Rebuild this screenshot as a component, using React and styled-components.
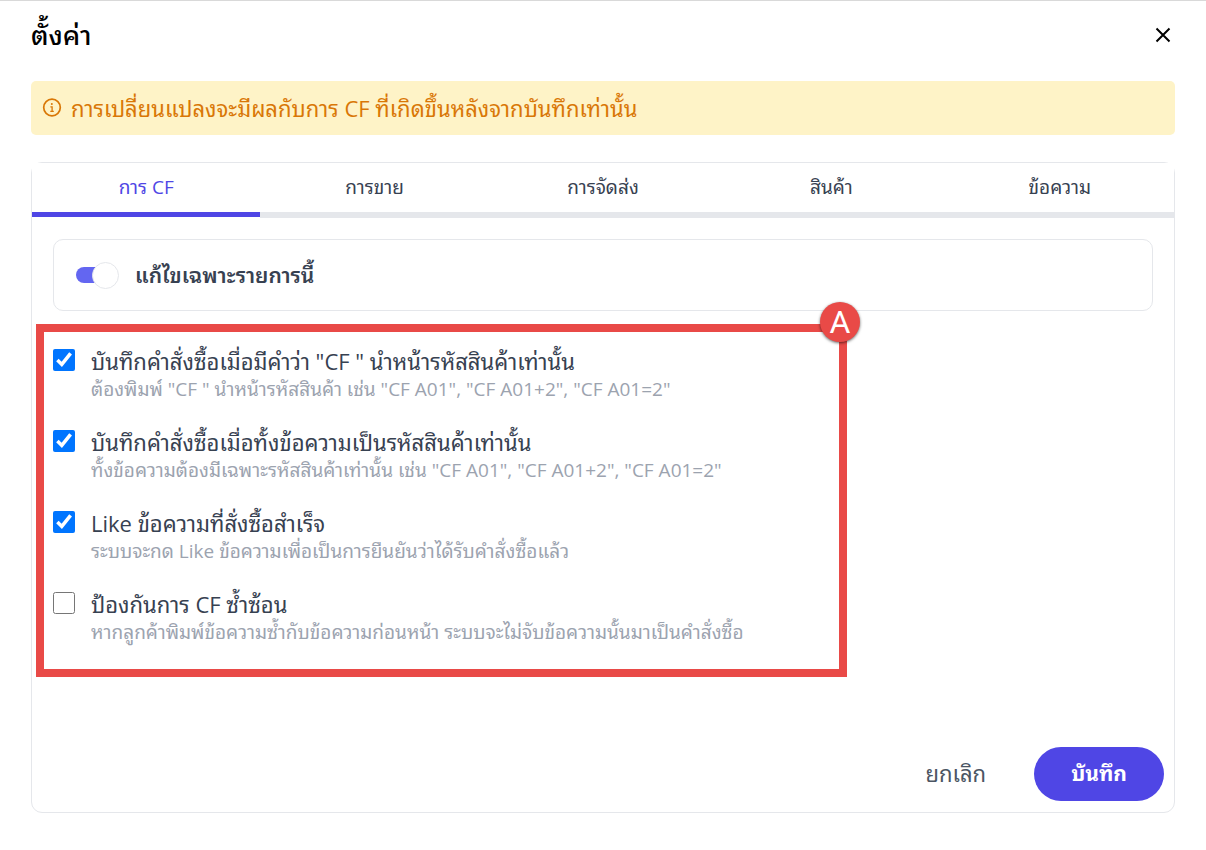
import React, { useState } from "react";
import styled, { createGlobalStyle } from "styled-components";

const GlobalStyle = createGlobalStyle`
  *, *::before, *::after {
    box-sizing: border-box;
  }

  body {
    margin: 0;
    background: #ffffff;
    color: #374151;
    font-family: "Open Sans", "Leelawadee UI", "Noto Sans Thai Looped", Loma, "Noto Sans Thai", sans-serif;
  }

  button, input {
    font-family: inherit;
    margin: 0;
  }
`;

const StyledWrapper = styled.main`
  padding: 0 31px 36px;
  border-top: 1px solid #d9d9d9;
`;

const StyledHeader = styled.header`
  display: flex;
  align-items: center;
  justify-content: space-between;
  height: 68px;
`;

const StyledHeading = styled.h1`
  margin: 0;
  color: #000000;
  font-size: 27px;
  font-weight: 500;
  line-height: 38px;
`;

const StyledCloseButton = styled.button`
  display: flex;
  padding: 4px;
  border: none;
  background: none;
  color: #000000;
  cursor: pointer;
`;

const StyledAlert = styled.div`
  display: flex;
  align-items: center;
  gap: 9px;
  min-height: 54px;
  margin-top: 12px;
  padding: 0 11px;
  border-radius: 5px;
  background: #fef3c7;
  color: #d97706;
  font-size: 22px;
  line-height: 32px;
`;

const StyledPanel = styled.section`
  margin-top: 27px;
  border: 1px solid #e5e7eb;
  border-radius: 11px;
`;

const StyledTabs = styled.div`
  display: grid;
  grid-template-columns: repeat(5, 1fr);
  align-items: start;
  background: #ffffff;
`;

const StyledTab = styled.button`
  height: ${({ $active }) => ($active ? 54 : 55)}px;
  padding: 0 0 2px;
  border: none;
  border-bottom: ${({ $active }) => ($active ? "5px solid #4f46e5" : "6px solid #e5e7eb")};
  background: #ffffff;
  color: ${({ $active }) => ($active ? "#4f46e5" : "#374151")};
  font-size: 19px;
  font-weight: 400;
  line-height: 28px;
  cursor: pointer;
`;

const StyledSwitchCard = styled.div`
  margin: 21px 21px 0;
  padding: 21px 22px;
  border: 1px solid #e5e7eb;
  border-radius: 10px;
`;

const StyledSwitchLabel = styled.label`
  display: flex;
  align-items: center;
  gap: 16px;
  font-size: 21px;
  font-weight: 600;
  line-height: 28px;
  cursor: pointer;
`;

const StyledSwitch = styled.input`
  display: flex;
  align-items: center;
  justify-content: ${({ checked }) => (checked ? "flex-end" : "flex-start")};
  appearance: none;
  width: 43px;
  height: 16px;
  border-radius: 8px;
  background: linear-gradient(
    to right,
    ${({ checked }) => (checked ? "#6366f1" : "#e5e7eb")} 32px,
    transparent 32px
  );
  cursor: pointer;

  &::before {
    content: "";
    width: 27px;
    height: 27px;
    flex: none;
    border: 1px solid #e5e7eb;
    border-radius: 50%;
    background: #ffffff;
  }
`;

const StyledOptions = styled.div`
  position: relative;
  display: flex;
  flex-direction: column;
  gap: 25px;
  width: 71%;
  margin: 13px 0 0 4px;
  padding: 14px 9px 24px;
  border: 8px solid #e94a47;
`;

const StyledMarker = styled.span`
  position: absolute;
  top: -30px;
  right: -21px;
  display: flex;
  align-items: center;
  justify-content: center;
  width: 40px;
  height: 40px;
  border-radius: 50%;
  background: #e94a47;
  box-shadow: 0 1px 3px rgba(0, 0, 0, 0.6);
  color: #ffffff;
  font-family: Roboto, sans-serif;
  font-size: 32px;
  line-height: 40px;
`;

const StyledOption = styled.label`
  display: flex;
  align-items: flex-start;
  gap: 16px;
  cursor: pointer;
`;

const StyledCheckbox = styled.input`
  flex: none;
  width: 22px;
  height: 22px;
  margin-top: 3px;
  accent-color: #0075ff;
`;

const StyledOptionText = styled.span`
  display: flex;
  flex-direction: column;
`;

const StyledOptionTitle = styled.span`
  color: #374151;
  font-size: 22px;
  line-height: 30px;
`;

const StyledOptionHint = styled.span`
  color: #9ca3af;
  font-size: 19px;
  line-height: 26px;
`;

const StyledFooter = styled.footer`
  display: flex;
  justify-content: flex-end;
  gap: 11px;
  margin-top: 70px;
  padding: 0 10px 11px;
`;

const StyledButton = styled.button`
  height: 54px;
  padding: 0 37px 2px;
  border: none;
  border-radius: 27px;
  background: ${({ $primary }) => ($primary ? "#4f46e5" : "transparent")};
  color: ${({ $primary }) => ($primary ? "#ffffff" : "#4b5563")};
  font-size: ${({ $primary }) => ($primary ? 21 : 22)}px;
  font-weight: ${({ $primary }) => ($primary ? 700 : 400)};
  line-height: 32px;
  cursor: pointer;
`;

const tabs = ["การ CF", "การขาย", "การจัดส่ง", "สินค้า", "ข้อความ"];

const options = [
  {
    title: 'บันทึกคำสั่งซื้อเมื่อมีคำว่า "CF " นำหน้ารหัสสินค้าเท่านั้น',
    hint: 'ต้องพิมพ์ "CF " นำหน้ารหัสสินค้า เช่น "CF A01", "CF A01+2", "CF A01=2"',
  },
  {
    title: "บันทึกคำสั่งซื้อเมื่อทั้งข้อความเป็นรหัสสินค้าเท่านั้น",
    hint: 'ทั้งข้อความต้องมีเฉพาะรหัสสินค้าเท่านั้น เช่น "CF A01", "CF A01+2", "CF A01=2"',
  },
  {
    title: "Like ข้อความที่สั่งซื้อสำเร็จ",
    hint: "ระบบจะกด Like ข้อความเพื่อเป็นการยืนยันว่าได้รับคำสั่งซื้อแล้ว",
  },
  {
    title: "ป้องกันการ CF ซ้ำซ้อน",
    hint: "หากลูกค้าพิมพ์ข้อความซ้ำกับข้อความก่อนหน้า ระบบจะไม่จับข้อความนั้นมาเป็นคำสั่งซื้อ",
  },
];

const CloseIcon = () => (
  <svg width="16" height="16" viewBox="0 0 16 16" fill="none" aria-hidden="true">
    <path d="M1.5 1.5l13 13M14.5 1.5l-13 13" stroke="currentColor" strokeWidth="2" />
  </svg>
);

const InfoIcon = () => (
  <svg width="20" height="20" viewBox="0 0 20 20" fill="none" aria-hidden="true">
    <circle cx="10" cy="9.5" r="8.3" stroke="currentColor" strokeWidth="1.7" />
    <circle cx="9.8" cy="6" r="1" fill="currentColor" />
    <path d="M8.4 8.9h1.7v4.3M8.3 13.3h3.5" stroke="currentColor" strokeWidth="1.3" />
  </svg>
);

const App = () => {
  const [activeTab, setActiveTab] = useState(0);
  const [onlyThis, setOnlyThis] = useState(true);
  const [checked, setChecked] = useState([true, true, true, false]);

  const toggleOption = (index) => {
    setChecked(checked.map((value, i) => (i === index ? !value : value)));
  };

  return (
    <>
      <GlobalStyle />
      <StyledWrapper>
        <StyledHeader>
          <StyledHeading>ตั้งค่า</StyledHeading>
          <StyledCloseButton type="button" aria-label="ปิด">
            <CloseIcon />
          </StyledCloseButton>
        </StyledHeader>
        <StyledAlert>
          <InfoIcon />
          <span>การเปลี่ยนแปลงจะมีผลกับการ CF ที่เกิดขึ้นหลังจากบันทึกเท่านั้น</span>
        </StyledAlert>
        <StyledPanel>
          <StyledTabs role="tablist">
            {tabs.map((tab, index) => (
              <StyledTab
                key={tab}
                type="button"
                role="tab"
                aria-selected={index === activeTab}
                $active={index === activeTab}
                onClick={() => setActiveTab(index)}
              >
                {tab}
              </StyledTab>
            ))}
          </StyledTabs>
          <StyledSwitchCard>
            <StyledSwitchLabel>
              <StyledSwitch
                type="checkbox"
                role="switch"
                checked={onlyThis}
                onChange={(e) => setOnlyThis(e.target.checked)}
              />
              แก้ไขเฉพาะรายการนี้
            </StyledSwitchLabel>
          </StyledSwitchCard>
          <StyledOptions>
            <StyledMarker>A</StyledMarker>
            {options.map(({ title, hint }, index) => (
              <StyledOption key={title}>
                <StyledCheckbox
                  type="checkbox"
                  checked={checked[index]}
                  onChange={() => toggleOption(index)}
                />
                <StyledOptionText>
                  <StyledOptionTitle>{title}</StyledOptionTitle>
                  <StyledOptionHint>{hint}</StyledOptionHint>
                </StyledOptionText>
              </StyledOption>
            ))}
          </StyledOptions>
          <StyledFooter>
            <StyledButton type="button">ยกเลิก</StyledButton>
            <StyledButton type="button" $primary>
              บันทึก
            </StyledButton>
          </StyledFooter>
        </StyledPanel>
      </StyledWrapper>
    </>
  );
};

export default App;
